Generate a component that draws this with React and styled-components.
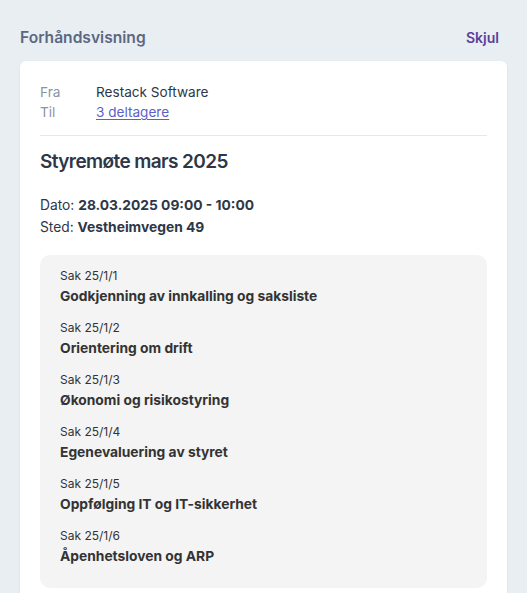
import React from "react";
import styled, { createGlobalStyle } from "styled-components";

const GlobalStyle = createGlobalStyle`
  html, body {
    margin: 0;
    padding: 0;
    background: #e9eef3;
    font-family: "Inter", "Noto Sans", sans-serif;
    -webkit-font-smoothing: antialiased;
  }
`;

const Page = styled.div`
  padding: 23px 20px 0 20px;
`;

const HeaderRow = styled.div`
  display: flex;
  align-items: center;
  justify-content: space-between;
  height: 28px;
  margin-bottom: 10px;
`;

const HeaderTitle = styled.h2`
  margin: 0;
  font-size: 15.6px;
  font-weight: 600;
  color: #5a6882;
`;

const HideButton = styled.button`
  border: none;
  background: none;
  padding: 4px 8px;
  font-family: inherit;
  font-size: 14px;
  font-weight: 600;
  color: #5b3f9a;
  cursor: pointer;
`;

const Card = styled.div`
  background: #ffffff;
  border-radius: 6px;
  box-shadow: 0 1px 3px rgba(30, 41, 59, 0.06);
  padding: 21px 20px 20px 20px;
`;

const MetaRow = styled.div`
  display: flex;
  font-size: 13.6px;
  line-height: 20px;
`;

const MetaLabel = styled.span`
  width: 56px;
  color: #8a94a6;
`;

const MetaValue = styled.span`
  color: #2d3748;
`;

const MetaLink = styled.a`
  color: #5b5fc7;
  text-decoration: underline;
  text-underline-offset: 2px;
`;

const Divider = styled.hr`
  border: none;
  border-top: 1px solid #e2e8f0;
  margin: 13px 0 12px 0;
`;

const MeetingTitle = styled.h1`
  margin: 0;
  font-size: 19px;
  line-height: 28px;
  font-weight: 600;
  letter-spacing: -0.6px;
  color: #2d3748;
`;

const Details = styled.div`
  margin-top: 18px;
  font-size: 13.8px;
  line-height: 22px;
  color: #2d3748;

  b {
    font-weight: 700;
  }
`;

const AgendaBox = styled.div`
  margin-top: 17px;
  background: #f4f4f5;
  border-radius: 10px;
  padding: 12px 20px 21px 20px;
  display: flex;
  flex-direction: column;
  gap: 12px;
`;

const AgendaItem = styled.div`
  display: flex;
  flex-direction: column;
`;

const CaseNumber = styled.span`
  font-size: 12px;
  line-height: 18px;
  color: #333333;
`;

const CaseTitle = styled.span`
  font-size: 13.8px;
  line-height: 22px;
  font-weight: 700;
  color: #333333;
`;

const agenda = [
  { id: "Sak 25/1/1", title: "Godkjenning av innkalling og saksliste" },
  { id: "Sak 25/1/2", title: "Orientering om drift" },
  { id: "Sak 25/1/3", title: "Økonomi og risikostyring" },
  { id: "Sak 25/1/4", title: "Egenevaluering av styret" },
  { id: "Sak 25/1/5", title: "Oppfølging IT og IT-sikkerhet" },
  { id: "Sak 25/1/6", title: "Åpenhetsloven og ARP" },
];

const App = () => {
  return (
    <>
      <GlobalStyle />
      <Page>
        <HeaderRow>
          <HeaderTitle>Forhåndsvisning</HeaderTitle>
          <HideButton>Skjul</HideButton>
        </HeaderRow>

        <Card>
          <MetaRow>
            <MetaLabel>Fra</MetaLabel>
            <MetaValue>Restack Software</MetaValue>
          </MetaRow>
          <MetaRow>
            <MetaLabel>Til</MetaLabel>
            <MetaLink href="#">3 deltagere</MetaLink>
          </MetaRow>

          <Divider />

          <MeetingTitle>Styremøte mars 2025</MeetingTitle>

          <Details>
            <div>
              Dato: <b>28.03.2025 09:00 - 10:00</b>
            </div>
            <div>
              Sted: <b>Vestheimvegen 49</b>
            </div>
          </Details>

          <AgendaBox>
            {agenda.map((item) => (
              <AgendaItem key={item.id}>
                <CaseNumber>{item.id}</CaseNumber>
                <CaseTitle>{item.title}</CaseTitle>
              </AgendaItem>
            ))}
          </AgendaBox>
        </Card>
      </Page>
    </>
  );
};

export default App;
